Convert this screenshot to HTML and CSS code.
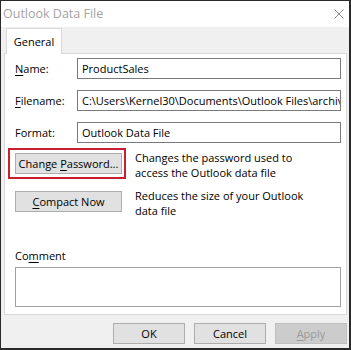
FILE: index.html
```html
<!DOCTYPE html>
<html>
<head>
<meta charset="utf-8">
<link rel="stylesheet" href="styles.css">
</head>
<body>
<div class="window">
  <div class="titlebar">
    <span class="title">Outlook Data File</span>
    <svg class="close" width="10" height="10" viewBox="0 0 10 10"><path d="M0.5 0.5 L9.5 9.5 M9.5 0.5 L0.5 9.5" stroke="#8a8a8a" stroke-width="1" fill="none"/></svg>
  </div>
  <div class="content">
    <div class="tabs"><div class="tab">General</div></div>
    <div class="panel">
      <div class="field"><span class="label"><u>N</u>ame:</span><div class="input">ProductSales</div></div>
      <div class="field"><span class="label"><u>F</u>ilename:</span><div class="input">C:\Users\Kernel30\Documents\Outlook Files\archive.pst</div></div>
      <div class="field"><span class="label">Format:</span><div class="input">Outlook Data File</div></div>
      <div class="action first">
        <div class="btn-holder"><div class="btn"><span>Change <u>P</u>assword...</span></div><div class="highlight"></div></div>
        <p class="desc">Changes the password used to<br>access the Outlook data file</p>
      </div>
      <div class="action">
        <div class="btn-holder"><div class="btn"><span><u>C</u>ompact Now</span></div></div>
        <p class="desc">Reduces the size of your Outlook<br>data file</p>
      </div>
      <div class="comment">
        <span class="clabel">Co<u>m</u>ment</span>
        <div class="cbox"></div>
      </div>
    </div>
    <div class="footer">
      <div class="fbtn">OK</div>
      <div class="fbtn">Cancel</div>
      <div class="fbtn disabled"><span><u>A</u>pply</span></div>
    </div>
  </div>
</div>
</body>
</html>
```
FILE: styles.css
```css
* { box-sizing: border-box; }
html, body { margin: 0; padding: 0; background: #fff; }
body { font-family: "Open Sans", "Noto Sans", sans-serif; font-size: 11px; color: #000; }
u { text-decoration: underline; text-underline-offset: 2px; text-decoration-thickness: 1px; }

.window {
  width: 351px; height: 350px;
  border: 1px solid #2a2a2a; border-right-width: 2px; border-bottom-width: 2px;
  background: #f0f0f0;
  display: flex; flex-direction: column;
}
.titlebar {
  height: 26px; background: #fff;
  display: flex; align-items: center; justify-content: space-between;
  padding: 0 5px 0 2px;
}
.title { color: #a3a3a3; font-size: 12.5px; margin-top: -1px; }
.close { display: block; }

.content { flex: 1; padding: 1px 2px 0 3px; display: flex; flex-direction: column; }
.tabs { display: flex; padding-left: 2px; position: relative; z-index: 1; }
.tab {
  width: 56px; height: 26px; background: #fff;
  border: 1px solid #d9d9d9; border-bottom: none;
  display: flex; align-items: center; justify-content: center;
  margin-bottom: -1px;
}
.panel {
  height: 262px; background: #fff; border: 1px solid #d9d9d9;
  padding: 4px 5px 7px 10px;
  display: flex; flex-direction: column;
}
.field { display: flex; align-items: center; height: 21px; margin-bottom: 11px; }
.label { width: 62px; flex: none; }
.input {
  flex: 1; height: 21px; border: 1px solid #7a7a7a;
  padding: 0 4px; line-height: 19px; white-space: nowrap; overflow: hidden;
}
.action { display: flex; align-items: flex-start; }
.action.first { margin-top: -1px; margin-bottom: 11px; }
.btn-holder { position: relative; flex: none; }
.btn {
  width: 107px; height: 21px; background: #e1e1e1; border: 1px solid #adadad;
  display: flex; align-items: center; justify-content: center;
}
.highlight {
  position: absolute; left: -7px; top: -5px; right: -4px; bottom: -5px;
  border: 2px solid #c8202f;
}
.desc { margin: -2px 0 0 13px; line-height: 14.5px; }

.comment { margin-top: auto; display: flex; flex-direction: column; }
.clabel { line-height: 14px; margin-bottom: 4px; }
.cbox { height: 40px; border: 1px solid #a0a0a0; }

.footer { display: flex; justify-content: flex-end; gap: 9px; padding-top: 8px; }
.fbtn {
  width: 72px; height: 21px; background: #e1e1e1; border: 1px solid #adadad;
  display: flex; align-items: center; justify-content: center;
}
.fbtn.disabled { background: #cccccc; border-color: #bfbfbf; color: #9a9a9a; }
```
